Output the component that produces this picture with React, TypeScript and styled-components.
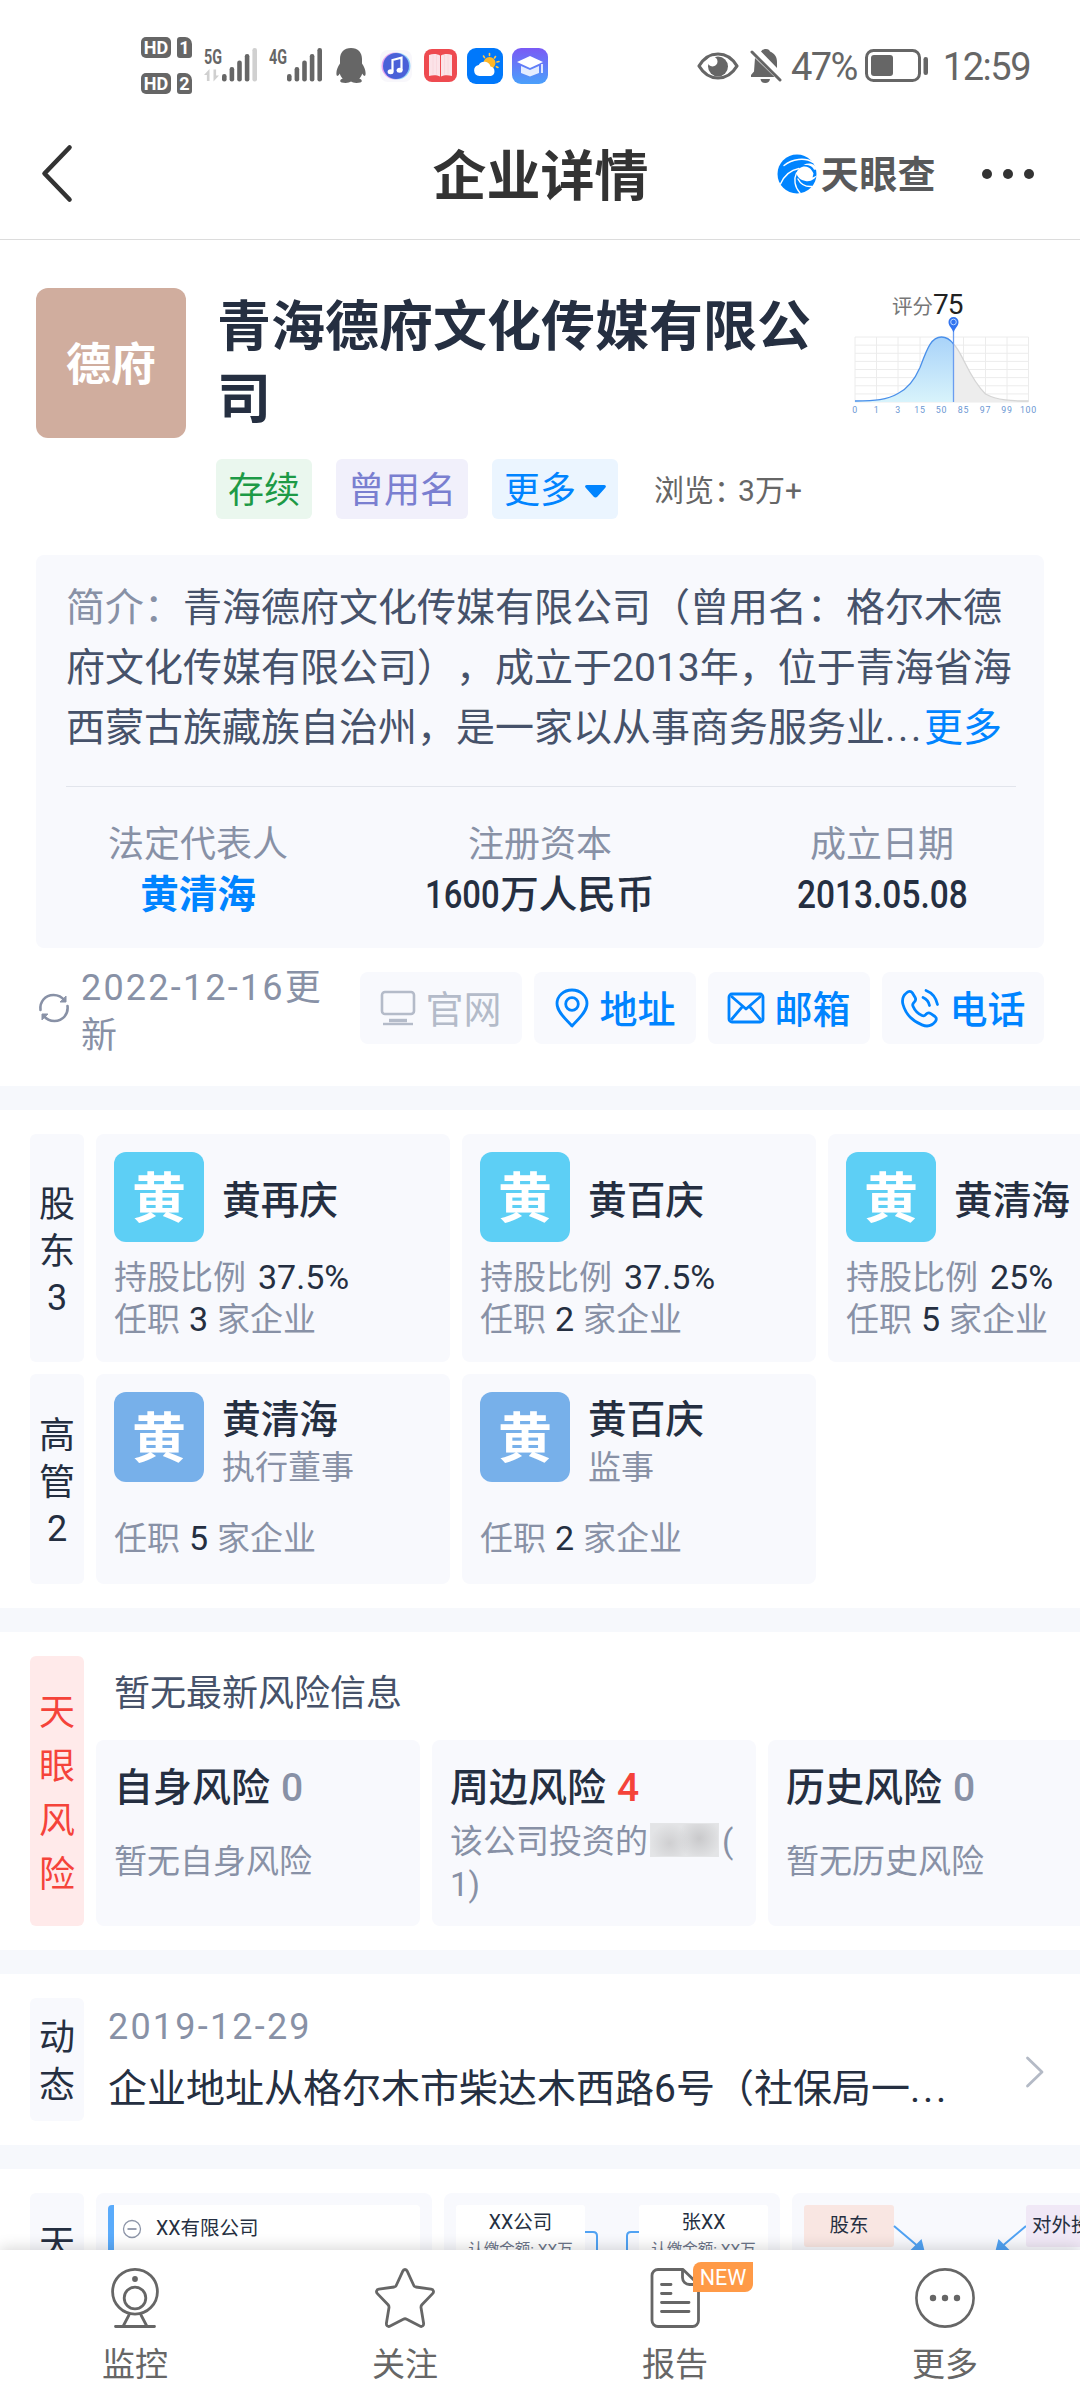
import React from "react";
import styled, { createGlobalStyle } from "styled-components";

const C = {
  ink: "#252f41",
  body: "#46526a",
  mute: "#8891a6",
  blue: "#0084ff",
  panel: "#f8f9fd",
  band: "#f6f8fc",
  gray: "#666666",
  red: "#f5433a",
};

const Global = createGlobalStyle`
  * { box-sizing: border-box; }
  html, body { margin: 0; padding: 0; background: #fff; }
  body {
    font-family: Roboto, "Noto Sans CJK SC", sans-serif;
    color: ${C.ink};
    text-spacing-trim: space-all;
    -webkit-font-smoothing: antialiased;
  }
  svg { display: block; flex: none; overflow: visible; }
`;

const Phone = styled.div`
  width: 1080px;
  height: 2400px;
  overflow: hidden;
  display: flex;
  flex-direction: column;
  background: #fff;
`;

/* ---------- status bar ---------- */
const StatusBar = styled.div`
  flex: none;
  height: 108px;
  padding: 23px 50px 0 141px;
  display: flex;
  align-items: center;
  justify-content: space-between;
`;
const StatusGroup = styled.div`
  display: flex;
  align-items: center;
`;
const HdStack = styled.div`
  display: grid;
  gap: 15px;
  margin-right: 12px;
`;
const HdRow = styled.div`
  display: flex;
  gap: 6px;
`;
const HdBadge = styled.span<{ $w: number; $r: string }>`
  width: ${(p) => p.$w}px;
  height: 21px;
  border-radius: ${(p) => p.$r};
  background: ${C.gray};
  color: #fff;
  font: 700 18px/21px Roboto, sans-serif;
  text-align: center;
`;
const Gap = styled.span<{ $w: number }>`
  flex: none;
  width: ${(p) => p.$w}px;
`;
const StatusText = styled.span<{ $ls: number }>`
  padding-top: 3px;
  font-size: 38px;
  line-height: 44px;
  color: ${C.gray};
  letter-spacing: ${(p) => p.$ls}px;
  white-space: nowrap;
`;

/* ---------- header ---------- */
const Header = styled.header`
  flex: none;
  height: 132px;
  padding: 0 45px 0 42px;
  display: grid;
  grid-template-columns: 1fr auto 1fr;
  align-items: center;
  border-bottom: 1px solid #dcdcdc;
`;
const Title = styled.h1`
  margin: 0;
  font-size: 54px;
  line-height: 60px;
  font-weight: 700;
  color: #333;
  padding: 8px 0 0 4px;
`;
const HeaderRight = styled.div`
  display: flex;
  justify-content: flex-end;
  align-items: center;
`;
const Brand = styled.span`
  font-size: 38px;
  line-height: 44px;
  font-weight: 700;
  color: #58595b;
  padding-top: 2px;
  margin: 0 46px 0 4px;
  letter-spacing: 0.4px;
`;

/* ---------- scroll body ---------- */
const Body = styled.main`
  flex: none;
  height: 2010px;
  overflow: hidden;
`;
const Intro = styled.section`
  padding: 48px 36px 30px;
`;
const CompanyRow = styled.div`
  display: flex;
`;
const Avatar = styled.div<{ $size: number; $bg: string; $fs: number }>`
  flex: none;
  width: ${(p) => p.$size}px;
  height: ${(p) => p.$size}px;
  border-radius: 12px;
  background: ${(p) => p.$bg};
  color: #fff;
  font-size: ${(p) => p.$fs}px;
  font-weight: 700;
  line-height: 1;
  padding-top: ${(p) => p.$fs / 8}px;
  display: flex;
  align-items: center;
  justify-content: center;
`;
const CompanyMain = styled.div`
  width: 606px;
  margin-left: 31px;
`;
const CompanyName = styled.h2`
  margin: 0;
  padding-top: 4px;
  height: 171px;
  font-size: 54px;
  line-height: 72px;
  font-weight: 700;
`;
const Tags = styled.div`
  margin-left: -1px;
  height: 60px;
  display: flex;
  align-items: center;
`;
const Tag = styled.span<{ $bg: string; $fg: string }>`
  height: 60px;
  padding: 4px 12px 0;
  margin-right: 24px;
  border-radius: 6px;
  background: ${(p) => p.$bg};
  color: ${(p) => p.$fg};
  font-size: 36px;
  line-height: 58px;
  display: flex;
  align-items: center;
  gap: 9px;
`;
const Views = styled.span`
  margin-left: 12px;
  padding-top: 3px;
  font-size: 30px;
  line-height: 57px;
  color: ${C.gray};
  white-space: nowrap;
`;
const Score = styled.div`
  width: 224px;
  margin-left: -3px;
`;
const ScoreHead = styled.div`
  padding: 3px 0 0 72px;
  display: flex;
  align-items: baseline;
  font-size: 20.5px;
  line-height: 28px;
  height: 28px;
  color: #777;
`;
const ScoreNum = styled.span`
  font-size: 28px;
  color: #222;
  letter-spacing: -1px;
`;
const ChartArea = styled.div`
  padding: 1px 0 0 30px;
`;

const InfoCard = styled.div`
  margin-top: 36px;
  height: 393px;
  border-radius: 8px;
  background: ${C.panel};
  padding: 21px 0 0;
`;
const Desc = styled.p`
  margin: 0 28px 0 30px;
  height: 211px;
  font-size: 39px;
  line-height: 60px;
  padding-top: 2px;
  color: ${C.body};
  white-space: pre;
  border-bottom: 1px solid #e2e5ec;
`;
const Tint = styled.span<{ $c: string }>`
  color: ${(p) => p.$c};
`;
const Dots = styled.span`
  letter-spacing: 2.7px;
`;
const Facts = styled.div`
  display: grid;
  grid-template-columns: 324px 360px 324px;
  padding-top: 33px;
  text-align: center;
`;
const FactLabel = styled.div`
  font-size: 36px;
  line-height: 50px;
  color: ${C.mute};
`;
const FactValue = styled.div<{ $link?: boolean }>`
  font-size: 38.6px;
  line-height: 50px;
  font-weight: ${(p) => (p.$link ? 700 : 500)};
  color: ${(p) => (p.$link ? C.blue : C.ink)};
`;
const Narrow = styled.span<{ $w: number; $natural: number }>`
  display: inline-block;
  transform: scaleX(${(p) => p.$w / p.$natural});
  transform-origin: left center;
  margin-right: ${(p) => p.$w - p.$natural}px;
`;

const ActionRow = styled.div`
  margin-top: 12px;
  height: 96px;
  display: flex;
  align-items: center;
`;
const Updated = styled.div`
  width: 278px;
  margin-left: 12px;
  padding-top: 8px;
  font-size: 36px;
  line-height: 48px;
  color: ${C.mute};
`;
const Spaced = styled.span<{ $ls: number }>`
  letter-spacing: ${(p) => p.$ls}px;
  white-space: nowrap;
`;
const Actions = styled.div`
  margin-left: auto;
  display: grid;
  grid-template-columns: repeat(4, 162px);
  gap: 12px;
`;
const Action = styled.button<{ $off?: boolean }>`
  height: 72px;
  border: 0;
  border-radius: 8px;
  padding: 0;
  background: ${C.panel};
  color: ${(p) => (p.$off ? "#b4bbc9" : C.blue)};
  font: ${(p) => (p.$off ? 400 : 500)} 38px/72px Roboto, "Noto Sans CJK SC", sans-serif;
  display: flex;
  align-items: center;
  justify-content: center;
  gap: 9px;
`;
const Nudge = styled.span`
  padding-top: 4px;
`;

/* ---------- sections ---------- */
const Section = styled.section`
  border-top: 24px solid ${C.band};
  padding: 24px 0 24px 30px;
  overflow: hidden;
`;
const Strip = styled.div<{ $h: number; $mt?: number }>`
  display: flex;
  gap: 12px;
  height: ${(p) => p.$h}px;
  margin-top: ${(p) => p.$mt ?? 0}px;
`;
const Side = styled.div<{ $lh: number; $risk?: boolean; $top?: number }>`
  flex: none;
  width: 54px;
  border-radius: 6px;
  background: ${(p) => (p.$risk ? "#ffeaea" : C.panel)};
  color: ${(p) => (p.$risk ? C.red : C.ink)};
  font-size: 36px;
  line-height: ${(p) => p.$lh}px;
  display: flex;
  flex-direction: column;
  align-items: center;
  justify-content: center;
  padding-top: ${(p) => p.$top ?? 8}px;
`;
const SideCount = styled.span`
  margin-top: -2px;
`;
const PersonCard = styled.div`
  flex: none;
  width: 354px;
  border-radius: 8px;
  background: ${C.panel};
  padding: 18px;
`;
const PersonHead = styled.div`
  display: flex;
  gap: 18px;
  height: 90px;
`;
const PersonNames = styled.div<{ $top: number }>`
  display: flex;
  flex-direction: column;
  justify-content: center;
  padding-top: ${(p) => p.$top}px;
`;
const PersonName = styled.div`
  flex: none;
  font-size: 38.7px;
  line-height: 50px;
  font-weight: 500;
`;
const Role = styled.div`
  flex: none;
  font-size: 33px;
  line-height: 46px;
  color: ${C.mute};
`;
const Stats = styled.div<{ $top: number }>`
  padding-top: ${(p) => p.$top}px;
  display: grid;
  grid-auto-rows: 42px;
  font-size: 33px;
  line-height: 42px;
  color: ${C.mute};
`;
const Num = styled.span<{ $l: number }>`
  font-size: 34px;
  color: ${C.ink};
  margin: 0 9px 0 ${(p) => p.$l}px;
`;

const RiskMain = styled.div`
  flex: none;
`;
const RiskNote = styled.div`
  height: 84px;
  padding: 2px 0 0 18px;
  font-size: 36px;
  line-height: 72px;
  color: ${C.body};
`;
const RiskCards = styled.div`
  display: flex;
  gap: 12px;
`;
const RiskCard = styled.div`
  flex: none;
  width: 324px;
  height: 186px;
  border-radius: 8px;
  background: ${C.panel};
  padding: 18px 0 0 18px;
`;
const RiskTitle = styled.div`
  height: 60px;
  font-size: 39px;
  line-height: 60px;
  font-weight: 500;
  display: flex;
  gap: 11px;
`;
const RiskSub = styled.div<{ $top?: number }>`
  height: 86px;
  padding-top: ${(p) => p.$top ?? 1}px;
  font-size: 33px;
  line-height: 43px;
  color: ${C.mute};
  display: flex;
  flex-direction: column;
  justify-content: center;
`;
const SubLine = styled.div`
  flex: none;
  display: flex;
  align-items: center;
`;
const Masked = styled.span`
  width: 69px;
  height: 34px;
  margin: 0 3px 4px 2px;
  border: 1px solid #e4e5e7;
  background: radial-gradient(circle at 28% 60%, #cfcfd1 0, transparent 38%),
    radial-gradient(circle at 72% 45%, #c9c9cb 0, transparent 42%), #e3e4e6;
`;

const NewsMain = styled.div`
  width: 900px;
  padding-left: 12px;
`;
const NewsDate = styled.div`
  font-size: 36px;
  line-height: 48px;
  padding-top: 5px;
  color: ${C.mute};
`;
const NewsText = styled.div`
  font-size: 39px;
  line-height: 60px;
  padding-top: 8px;
  height: 68px;
  white-space: nowrap;
`;

const ChartCard = styled.div`
  flex: none;
  width: 336px;
  border-radius: 8px;
  background: ${C.panel};
  padding: 12px 12px 0;
  display: flex;
  align-items: flex-start;
`;
const TreeBox = styled.div`
  width: 312px;
  height: 143px;
  background: #fff;
  border-left: 6px solid #5aabfb;
  border-radius: 4px;
  padding: 9px 0 0 9px;
  display: flex;
  align-items: flex-start;
  gap: 15px;
  font-size: 19.5px;
  line-height: 30px;
`;
const Node = styled.div`
  width: 129px;
  height: 100px;
  border-radius: 3px;
  background: #fff;
  text-align: center;
  font-size: 19.5px;
  line-height: 30px;
  padding-top: 3px;
  white-space: nowrap;
`;
const NodeSub = styled.div`
  font-size: 15.5px;
  line-height: 24px;
  color: #6b7488;
`;
const Chip = styled.div<{ $bg: string; $w: number }>`
  flex: none;
  width: ${(p) => p.$w}px;
  height: 42px;
  border-radius: 3px;
  background: ${(p) => p.$bg};
  text-align: center;
  font-size: 19.5px;
  line-height: 42px;
  white-space: nowrap;
`;

/* ---------- tab bar ---------- */
const TabBar = styled.nav`
  flex: none;
  height: 150px;
  background: #fff;
  box-shadow: 0 -2px 14px rgba(0, 0, 0, 0.16);
  position: relative;
  display: grid;
  grid-template-columns: repeat(4, 1fr);
`;
const Tab = styled.div`
  position: relative;
  padding-top: 18px;
  display: flex;
  flex-direction: column;
  align-items: center;
  font-size: 33px;
  line-height: 44px;
  color: ${C.gray};
  gap: 15px;
`;
const NewBadge = styled.span`
  position: absolute;
  left: 153px;
  top: 12px;
  width: 60px;
  height: 30px;
  border-radius: 8px 0 8px 0;
  background: #ff9a47;
  color: #fff;
  font: 400 21.5px/32px Roboto, sans-serif;
  text-align: center;
`;

/* ---------- drawings ---------- */
const Signal = ({ label, weak, arrows }: { label: string; weak?: boolean; arrows?: boolean }) => (
  <svg width="53" height="35" viewBox="0 0 53 35">
    <text x="0" y="15.5" fontFamily="Roboto" fontWeight="700" fontSize="21" fill={C.gray} textLength="18" lengthAdjust="spacingAndGlyphs">
      {label}
    </text>
    {arrows && (
      <g fill="#d0d0d0">
        <path d="M0 27l5.5-6v12h-2.6v-6z" />
        <path d="M15 27.5l-5.5 6v-12h2.6v6z" />
      </g>
    )}
    {[26, 19, 12.5, 6, 0].map((y, i) => (
      <rect key={i} x={18 + i * 7.6} y={y} width="4.6" height={33.5 - y} rx="2.2" fill={weak && i === 4 ? "#d0d0d0" : C.gray} />
    ))}
  </svg>
);

const Penguin = () => (
  <svg width="30" height="35" viewBox="0 0 30 35" fill={C.gray}>
    <path d="M15 0C8 0 4 4.600 4 11v4.500C2 18.500.4 22 .4 25.200c0 2.300.6 3 1.300 2.600.8-.4 1.500-1.500 2.100-2.400.5 2 1.500 3.700 2.900 5.100-1.500.6-2.500 1.500-2.500 2.600C4.200 34.500 6.600 35 9.600 35c2.300 0 4.300-.5 5.400-1.400 1.100.9 3.100 1.400 5.400 1.400 3 0 5.400-.5 5.400-1.900 0-1.100-1-2-2.500-2.600 1.400-1.400 2.400-3.100 2.900-5.100.6.9 1.300 2 2.100 2.400.7.4 1.300-.3 1.300-2.600 0-3.200-1.600-6.700-3.600-9.700V11C26 4.600 22 0 15 0z" />
  </svg>
);

const MusicApp = () => (
  <svg width="32" height="32" viewBox="0 0 32 32">
    <rect width="32" height="32" rx="8" fill="#f8f7fb" />
    <circle cx="15" cy="16" r="13.500" fill="#e9a6ef" />
    <circle cx="17.200" cy="16" r="13.300" fill="#8fd0f8" />
    <circle cx="16" cy="16" r="13" fill="#4a60d8" />
    <path d="M12.500 21.500V10l9-2.300v12.300" fill="none" stroke="#fff" strokeWidth="2.200" />
    <ellipse cx="10.600" cy="21.800" rx="3" ry="2.500" fill="#fff" />
    <ellipse cx="19.600" cy="20.200" rx="3" ry="2.500" fill="#fff" />
  </svg>
);

const BookApp = () => (
  <svg width="33" height="33" viewBox="0 0 33 33">
    <rect width="33" height="33" rx="8" fill="#ee4a50" />
    <path d="M5 6c4-1.500 8-1.300 11 .5v21c-3-1.500-7-1.700-11-.5z" fill="#fbe3e8" />
    <path d="M28 6c-4-1.500-8-1.300-11 .5v21c3-1.500 7-1.700 11-.5z" fill="#fbe3e8" />
    <path d="M9 6v19.500M12.500 6v19.500M20.500 6v19.500M24 6v19.500" stroke="#f9d8de" strokeWidth="1" />
  </svg>
);

const WeatherApp = () => (
  <svg width="36" height="36" viewBox="0 0 36 36">
    <rect width="36" height="36" rx="9" fill="#0078fb" />
    <circle cx="22.500" cy="15" r="6" fill="#ffb726" />
    <path d="M22.500 5.500v2M28.500 8.500l-1 1.500M32 13.500l-2 .5M31 19.500l-1.600-.8M16.500 8l1 1.600" stroke="#ffc64a" strokeWidth="1.600" strokeLinecap="round" />
    <path d="M12.500 28a5.600 5.600 0 0 1-.8-11.100 6.500 6.500 0 0 1 11.800 1.600A4.900 4.900 0 0 1 24 28z" fill="#fff" />
  </svg>
);

const SchoolApp = () => (
  <svg width="36" height="36" viewBox="0 0 36 36">
    <defs>
      <linearGradient id="school" x1="0" y1="0" x2="0" y2="1">
        <stop offset="0" stopColor="#7a5af5" />
        <stop offset="1" stopColor="#4aa0fb" />
      </linearGradient>
    </defs>
    <rect width="36" height="36" rx="9" fill="url(#school)" />
    <path d="M18 8l13 6-13 6-13-6z" fill="#fff" />
    <path d="M9 18l9 4 9-4v7l-9 3.500L9 25z" fill="#e4ecff" />
    <path d="M30 16v9" stroke="#fff" strokeWidth="1.600" />
  </svg>
);

const Eye = () => (
  <svg width="42" height="28" viewBox="0 0 42 28">
    <path d="M2 14C6.500 6.500 13 2 21 2s14.500 4.500 19 12c-4.500 7.500-11 12-19 12S6.500 21.500 2 14z" fill="none" stroke={C.gray} strokeWidth="3.200" strokeLinejoin="round" />
    <circle cx="21" cy="14.500" r="10" fill={C.gray} />
    <circle cx="15.500" cy="9.500" r="5" fill="#fff" />
  </svg>
);

const BellOff = () => (
  <svg width="32" height="34" viewBox="0 0 32 34">
    <path d="M11 2.500C12.200 1 13.500 0 16 0s3.400 1 4 2.600c4.500 1.800 7 5.200 7 10.400v6z" fill={C.gray} />
    <path d="M5 9l19.500 19H1v-2l3-3.500z" fill={C.gray} />
    <path d="M10.500 30h9.500a4.800 4.800 0 0 1-9.500 0z" fill={C.gray} />
    <path d="M2 3l28 28" stroke={C.gray} strokeWidth="3" strokeLinecap="round" />
    <path d="M6 3l22 21.800" stroke="#fff" strokeWidth="1.800" />
  </svg>
);

const Battery = () => (
  <svg width="63" height="33" viewBox="0 0 63 33">
    <rect x="1.500" y="1.500" width="53" height="30" rx="7" fill="none" stroke={C.gray} strokeWidth="3" />
    <rect x="6" y="6" width="22" height="21" rx="3" fill={C.gray} />
    <rect x="58.500" y="8" width="4.500" height="18" rx="2.200" fill={C.gray} />
  </svg>
);

const BrandMark = () => (
  <svg width="40" height="40" viewBox="0 0 40 40">
    <circle cx="20" cy="20" r="19.500" fill={C.blue} />
    <path d="M40.500 15.500c-3-6.500-9-7-14-4.500 6-.5 9 1.500 10.500 4.700z" fill="#fff" />
    <path d="M19.500 19c1.500-5 7-8 12-5.500 3 1.700 4 4 5 6l-1 4 4.500-2c-2 3-5.500 6.500-11.500 5.500-5-.8-8.500-4-9-8z" fill="#fff" />
    <g fill="none" stroke="#fff" strokeWidth="1.400" strokeLinecap="round">
      <path d="M36 8.500C28 3 15 5 7 11.500" />
      <path d="M22 14.500C14 16 7 22 3.500 30" />
      <path d="M19.500 19c-3 6-2 14 3.500 20" />
      <path d="M21 25c2.500 5 7.500 8 14 7.500" />
    </g>
  </svg>
);

const ScoreChart = () => {
  const xs = [0, 21.5, 43, 65, 86.500, 108.500, 130.500, 152, 173.500];
  const labels = ["0", "1", "3", "15", "50", "85", "97", "99", "100"];
  return (
    <svg width="190" height="100" viewBox="-5 0 190 100">
      <defs>
        <linearGradient id="score" x1="0" y1="0" x2="0" y2="1">
          <stop offset="0" stopColor="#a9d3f9" />
          <stop offset="1" stopColor="#d8f3fb" />
        </linearGradient>
      </defs>
      <g stroke="#ececec" strokeWidth="1">
        {xs.map((x) => (
          <path key={x} d={`M${x} 20v65`} />
        ))}
        {xs.map((_, i) => (
          <path key={i} d={`M0 ${20 + i * 8.13}h173.500`} />
        ))}
      </g>
      <path d="M98.500 27C108 36 113 60 130.500 77c12 6.500 26 7 43 7v1h-75z" fill="#ededed" />
      <path d="M0 84c20-.3 32-1 43-7.500C54 71 60 62 65 50.500 72 32 76 20 86.500 20c5 0 9 3 12 7v58H0z" fill="url(#score)" />
      <path d="M98.500 27C108 36 113 60 130.500 77c12 6.500 26 7 43 7" fill="none" stroke="#d5d5d5" strokeWidth="1.300" />
      <path d="M0 84c20-.3 32-1 43-7.500C54 71 60 62 65 50.500 72 32 76 20 86.500 20c5 0 9 3 12 7" fill="none" stroke="#4a90ea" strokeWidth="1.300" />
      <path d="M98.500 12v73" stroke="#6a9df0" strokeWidth="1.300" />
      <path d="M98.500 15.500c-1.500-4.500-5-6.500-5-10.500a5 5 0 0 1 10 0c0 4-3.500 6-5 10.500z" fill="#3274f0" />
      <circle cx="98.500" cy="5" r="2.800" fill="none" stroke="#bcd6ff" strokeWidth="1" />
      <g fill="#6b97d3" fontSize="8.800" fontFamily="Roboto" textAnchor="middle" letterSpacing="0.8">
        {labels.map((l, i) => (
          <text key={l} x={xs[i]} y="96">
            {l}
          </text>
        ))}
      </g>
    </svg>
  );
};

const Refresh = () => (
  <svg width="30" height="30" viewBox="0 0 30 30" fill="none" stroke={C.mute} strokeWidth="2.600" strokeLinecap="round">
    <path d="M1.500 17C.5 9 6 2 14.500 2c4.500 0 8.500 2 11 5.500" />
    <path d="M28.500 13c1 8-4.500 15-13 15-4.500 0-8.500-2-11-5.500" />
    <path d="M27 3.500V9h-5.500zM3 26.500V21h5.500z" fill={C.mute} strokeWidth="1" />
  </svg>
);

const Monitor = () => (
  <svg width="36" height="36" viewBox="0 0 36 36" fill="none" stroke="currentColor" strokeWidth="2.600">
    <rect x="2" y="2" width="32" height="22" rx="3" />
    <path d="M9 30.500h18" strokeWidth="3.400" />
    <path d="M3 34h30" strokeWidth="2.400" />
  </svg>
);
const Pin = () => (
  <svg width="36" height="40" viewBox="0 0 36 40" fill="none" stroke="currentColor" strokeWidth="2.800">
    <path d="M18 38C13 32 3 24.500 3 15.500 3 8 9.500 2 18 2s15 6 15 13.500C33 24.500 23 32 18 38z" strokeLinejoin="round" />
    <circle cx="18" cy="16" r="6.300" />
  </svg>
);
const Mail = () => (
  <svg width="38" height="32" viewBox="0 0 38 32" fill="none" stroke="currentColor" strokeWidth="2.800" strokeLinejoin="round">
    <rect x="2" y="2" width="34" height="28" rx="3" />
    <path d="M4 4l15 13L34 4M4 28l11.500-13.500M34 28L22.500 14.500" />
  </svg>
);
const Handset = () => (
  <svg width="40" height="40" viewBox="0 0 40 40" fill="none" stroke="currentColor" strokeWidth="2.800" strokeLinecap="round" strokeLinejoin="round">
    <path d="M7 4.500c1.500-1.500 4-1.500 5.300.3l2.700 4.400c1 1.700.7 3.500-.7 4.800-1.700 1.500-2 2.700-1.300 4.200 1.700 4 5 7.500 9 9.300 1.500.7 2.700.3 4-1.200 1.400-1.500 3.200-1.700 4.800-.7l4.200 2.900c1.700 1.300 1.700 3.500.3 5.200-3.300 4-8.300 5.300-13.300 3.200C12.500 33 5.500 25.500 3 16.500 1.700 11.500 3 7.500 7 4.500z" />
    <path d="M23 9.500c3.500 1.500 5.700 4 6.500 8M26 2.500c6 2.300 10 7 11.500 14" />
  </svg>
);

const Webcam = () => (
  <svg width="60" height="60" viewBox="0 0 60 60" fill="none" stroke={C.gray} strokeWidth="2.800" strokeLinecap="round">
    <circle cx="30" cy="23.700" r="22.400" />
    <circle cx="30" cy="30" r="10.800" />
    <circle cx="30" cy="11" r="2.900" fill={C.gray} stroke="none" />
    <path d="M24 47l-5.500 10.500M36 47l5.500 10.500M10.500 58.500h39" />
  </svg>
);
const Star = () => (
  <svg width="60" height="60" viewBox="0 0 60 60" fill="none" stroke={C.gray} strokeWidth="2.800" strokeLinejoin="round">
    <path d="M27.800 3.200c.8-2.300 3.600-2.300 4.400 0l6.600 14.300c.4.900 1.100 1.300 2 1.500l15.300 2.200c2.400.4 3.200 2.600 1.500 4.400L46.900 36.800c-.8.900-1 1.700-.9 2.800l2.600 15.600c.3 2.500-1.600 4-3.800 2.900l-13.100-6.900c-1.100-.6-2.200-.6-3.400 0l-13.100 6.900c-2.200 1.100-4.100-.4-3.800-2.900L14 39.600c.1-1.100-.1-1.900-.9-2.800L2.400 25.600c-1.700-1.800-.9-4 1.500-4.400L19.200 19c.9-.2 1.600-.6 2-1.500z" />
  </svg>
);
const Doc = () => (
  <svg width="60" height="60" viewBox="0 0 60 60" fill="none" stroke={C.gray} strokeWidth="2.800" strokeLinecap="round" strokeLinejoin="round">
    <path d="M38 1.500H13a6 6 0 0 0-6 6v45a6 6 0 0 0 6 6h34.500a6 6 0 0 0 6-6V16.500z" />
    <path d="M37.500 2v7.500a7 7 0 0 0 7 7h8" />
    <path d="M16.500 16.500h9.500M16.500 25.500h9.500M16.500 34.500h27.500M16.500 43.500h27.500" />
  </svg>
);
const More = () => (
  <svg width="60" height="60" viewBox="0 0 60 60">
    <circle cx="30" cy="30" r="28.600" fill="none" stroke={C.gray} strokeWidth="2.600" />
    {[18, 30, 42].map((x) => (
      <circle key={x} cx={x} cy="30" r="3.200" fill={C.gray} />
    ))}
  </svg>
);

/* ---------- data ---------- */
const holders = [
  { name: "黄再庆", share: "37.5%", jobs: 3 },
  { name: "黄百庆", share: "37.5%", jobs: 2 },
  { name: "黄清海", share: "25%", jobs: 5 },
];
const managers = [
  { name: "黄清海", role: "执行董事", jobs: 5 },
  { name: "黄百庆", role: "监事", jobs: 2 },
];

const Jobs = ({ n }: { n: number }) => (
  <div>
    任职<Num $l={9}>{n}</Num>家企业
  </div>
);

const SideLabel = ({
  chars,
  count,
  ...rest
}: {
  chars: string;
  count?: number;
  $lh: number;
  $risk?: boolean;
  $top?: number;
}) => (
  <Side {...rest}>
    {[...chars].map((c, i) => (
      <span key={i}>{c}</span>
    ))}
    {count !== undefined && <SideCount>{count}</SideCount>}
  </Side>
);

export default function App() {
  return (
    <Phone>
      <Global />
      <StatusBar>
        <StatusGroup>
          <HdStack>
            {[1, 2].map((n) => (
              <HdRow key={n}>
                <HdBadge $w={30} $r="5px">HD</HdBadge>
                <HdBadge $w={15} $r="3px 7px 3px 3px">{n}</HdBadge>
              </HdRow>
            ))}
          </HdStack>
          <Signal label="5G" weak arrows />
          <Gap $w={12} />
          <Signal label="4G" />
          <Gap $w={14} />
          <Penguin />
          <Gap $w={14} />
          <MusicApp />
          <Gap $w={12} />
          <BookApp />
          <Gap $w={10} />
          <WeatherApp />
          <Gap $w={9} />
          <SchoolApp />
        </StatusGroup>
        <StatusGroup>
          <Eye />
          <Gap $w={11} />
          <BellOff />
          <Gap $w={9} />
          <StatusText $ls={-1.6}>47%</StatusText>
          <Gap $w={8} />
          <Battery />
          <Gap $w={15} />
          <StatusText $ls={-1.5}>12:59</StatusText>
        </StatusGroup>
      </StatusBar>

      <Header>
        <svg width="30" height="57" viewBox="0 0 30 57" fill="none" stroke="#333" strokeWidth="4.600" strokeLinecap="round" strokeLinejoin="round">
          <path d="M27.500 2.500L2.500 28.500l25 26" />
        </svg>
        <Title>企业详情</Title>
        <HeaderRight>
          <BrandMark />
          <Brand>天眼查</Brand>
          <svg width="53" height="10" viewBox="0 0 53 10" fill="#333">
            <circle cx="5" cy="5" r="5" />
            <circle cx="26" cy="5" r="5" />
            <circle cx="47" cy="5" r="5" />
          </svg>
        </HeaderRight>
      </Header>

      <Body>
        <Intro>
          <CompanyRow>
            <Avatar $size={150} $bg="#d0ad9e" $fs={45}>德府</Avatar>
            <CompanyMain>
              <CompanyName>青海德府文化传媒有限公司</CompanyName>
              <Tags>
                <Tag $bg="#eaf7ee" $fg="#1d9a46">存续</Tag>
                <Tag $bg="#f1f0fb" $fg="#7a7fd0">曾用名</Tag>
                <Tag $bg="#ebf5ff" $fg={C.blue}>
                  更多
                  <svg width="21" height="13" viewBox="0 0 21 13" fill={C.blue}>
                    <path d="M2 0h17c2 0 2.500 1.500 1.300 2.800l-7.800 8.700c-1.200 1.300-2.800 1.300-4 0L.7 2.800C-.5 1.500 0 0 2 0z" />
                  </svg>
                </Tag>
                <Views>
                  浏览<Spaced $ls={-6}>：</Spaced>3万+
                </Views>
              </Tags>
            </CompanyMain>
            <Score>
              <ScoreHead>
                评分<ScoreNum>75</ScoreNum>
              </ScoreHead>
              <ChartArea>
                <ScoreChart />
              </ChartArea>
            </Score>
          </CompanyRow>

          <InfoCard>
            <Desc>
              <Tint $c={C.mute}>简介：</Tint>青海德府文化传媒有限公司（曾用名：格尔木德{"\n"}
              府文化传媒有限公司），成立于2013年，位于青海省海{"\n"}
              西蒙古族藏族自治州，是一家以从事商务服务业<Dots>...</Dots>
              <Tint $c={C.blue}>更多</Tint>
            </Desc>
            <Facts>
              <div>
                <FactLabel>法定代表人</FactLabel>
                <FactValue $link>黄清海</FactValue>
              </div>
              <div>
                <FactLabel>注册资本</FactLabel>
                <FactValue>
                  <Narrow $w={74} $natural={87}>1600</Narrow>万人民币
                </FactValue>
              </div>
              <div>
                <FactLabel>成立日期</FactLabel>
                <FactValue>
                  <Narrow $w={170} $natural={196}>2013.05.08</Narrow>
                </FactValue>
              </div>
            </Facts>
          </InfoCard>

          <ActionRow>
            <Gap $w={3} />
            <Refresh />
            <Updated>
              <Spaced $ls={2.2}>2022-12-16</Spaced>更<br />新
            </Updated>
            <Actions>
              <Action $off>
                <Monitor />
                <Nudge>官网</Nudge>
              </Action>
              <Action>
                <Pin />
                <Nudge>地址</Nudge>
              </Action>
              <Action>
                <Mail />
                <Nudge>邮箱</Nudge>
              </Action>
              <Action>
                <Handset />
                <Nudge>电话</Nudge>
              </Action>
            </Actions>
          </ActionRow>
        </Intro>

        <Section>
          <Strip $h={228}>
            <SideLabel chars="股东" count={3} $lh={47.5} />
            {holders.map((p) => (
              <PersonCard key={p.name}>
                <PersonHead>
                  <Avatar $size={90} $bg="#5dcff5" $fs={54}>黄</Avatar>
                  <PersonNames $top={7}>
                    <PersonName>{p.name}</PersonName>
                  </PersonNames>
                </PersonHead>
                <Stats $top={14}>
                  <div>
                    持股比例<Num $l={12}>{p.share}</Num>
                  </div>
                  <Jobs n={p.jobs} />
                </Stats>
              </PersonCard>
            ))}
          </Strip>
          <Strip $h={210} $mt={12}>
            <SideLabel chars="高管" count={2} $lh={47.5} />
            {managers.map((p) => (
              <PersonCard key={p.name}>
                <PersonHead>
                  <Avatar $size={90} $bg="#77b0ea" $fs={54}>黄</Avatar>
                  <PersonNames $top={12}>
                    <PersonName>{p.name}</PersonName>
                    <Role>{p.role}</Role>
                  </PersonNames>
                </PersonHead>
                <Stats $top={35}>
                  <Jobs n={p.jobs} />
                </Stats>
              </PersonCard>
            ))}
          </Strip>
        </Section>

        <Section>
          <Strip $h={270}>
            <SideLabel chars="天眼风险" $lh={54} $top={6} $risk />
            <RiskMain>
              <RiskNote>暂无最新风险信息</RiskNote>
              <RiskCards>
                <RiskCard>
                  <RiskTitle>
                    自身风险<Tint $c={C.mute}>0</Tint>
                  </RiskTitle>
                  <RiskSub>暂无自身风险</RiskSub>
                </RiskCard>
                <RiskCard>
                  <RiskTitle>
                    周边风险<Tint $c={C.red}>4</Tint>
                  </RiskTitle>
                  <RiskSub $top={4}>
                    <SubLine>
                      该公司投资的
                      <Masked />(
                    </SubLine>
                    <SubLine>1)</SubLine>
                  </RiskSub>
                </RiskCard>
                <RiskCard>
                  <RiskTitle>
                    历史风险<Tint $c={C.mute}>0</Tint>
                  </RiskTitle>
                  <RiskSub>暂无历史风险</RiskSub>
                </RiskCard>
              </RiskCards>
            </RiskMain>
          </Strip>
        </Section>

        <Section>
          <Strip $h={123}>
            <SideLabel chars="动态" $lh={48} $top={5} />
            <NewsMain>
              <NewsDate>
                <Spaced $ls={2.2}>2019-12-29</Spaced>
              </NewsDate>
              <NewsText>
                企业地址从格尔木市柴达木西路6号（社保局一<Dots>...</Dots>
              </NewsText>
            </NewsMain>
            <Gap $w={6} />
            <svg width="18" height="148" viewBox="0 0 18 148" fill="none" stroke="#b4bac6" strokeWidth="2.800" strokeLinecap="round" strokeLinejoin="round">
              <path d="M1.500 60l14.500 14-14.500 14" />
            </svg>
          </Strip>
        </Section>

        <Section>
          <Strip $h={155}>
            <SideLabel chars="天眼" $lh={54} $top={0} />
            <ChartCard>
              <TreeBox>
                <svg width="18" height="30" viewBox="0 0 18 30" fill="none" stroke="#8d95a8" strokeWidth="1.300">
                  <circle cx="9" cy="15" r="8.500" />
                  <path d="M4.500 15h9" strokeWidth="1.800" />
                </svg>
                XX有限公司
              </TreeBox>
            </ChartCard>
            <ChartCard>
              <Node>
                XX公司
                <NodeSub>认缴金额: XX万</NodeSub>
              </Node>
              <svg width="54" height="60" viewBox="0 0 54 60" fill="none" stroke="#50a2f3" strokeWidth="2">
                <path d="M0 27h8q4 0 4 4v29M54 27h-8q-4 0-4 4v29" />
              </svg>
              <Node>
                张XX
                <NodeSub>认缴金额: XX万</NodeSub>
              </Node>
            </ChartCard>
            <ChartCard>
              <Chip $bg="#f9e6e2" $w={90}>股东</Chip>
              <svg width="132" height="60" viewBox="0 0 132 60" fill="none" stroke="#50a2f3" strokeWidth="2">
                <path d="M0 21l26 22M132 21l-26 22" />
                <path d="M27 36l3 12-13-2zM105 36l-3 12 13-2z" fill="#50a2f3" />
              </svg>
              <Chip $bg="#f0e8f6" $w={90}>对外投资</Chip>
            </ChartCard>
          </Strip>
        </Section>
      </Body>

      <TabBar>
        <Tab>
          <Webcam />
          监控
        </Tab>
        <Tab>
          <Star />
          关注
        </Tab>
        <Tab>
          <Doc />
          报告
          <NewBadge>NEW</NewBadge>
        </Tab>
        <Tab>
          <More />
          更多
        </Tab>
      </TabBar>
    </Phone>
  );
}
